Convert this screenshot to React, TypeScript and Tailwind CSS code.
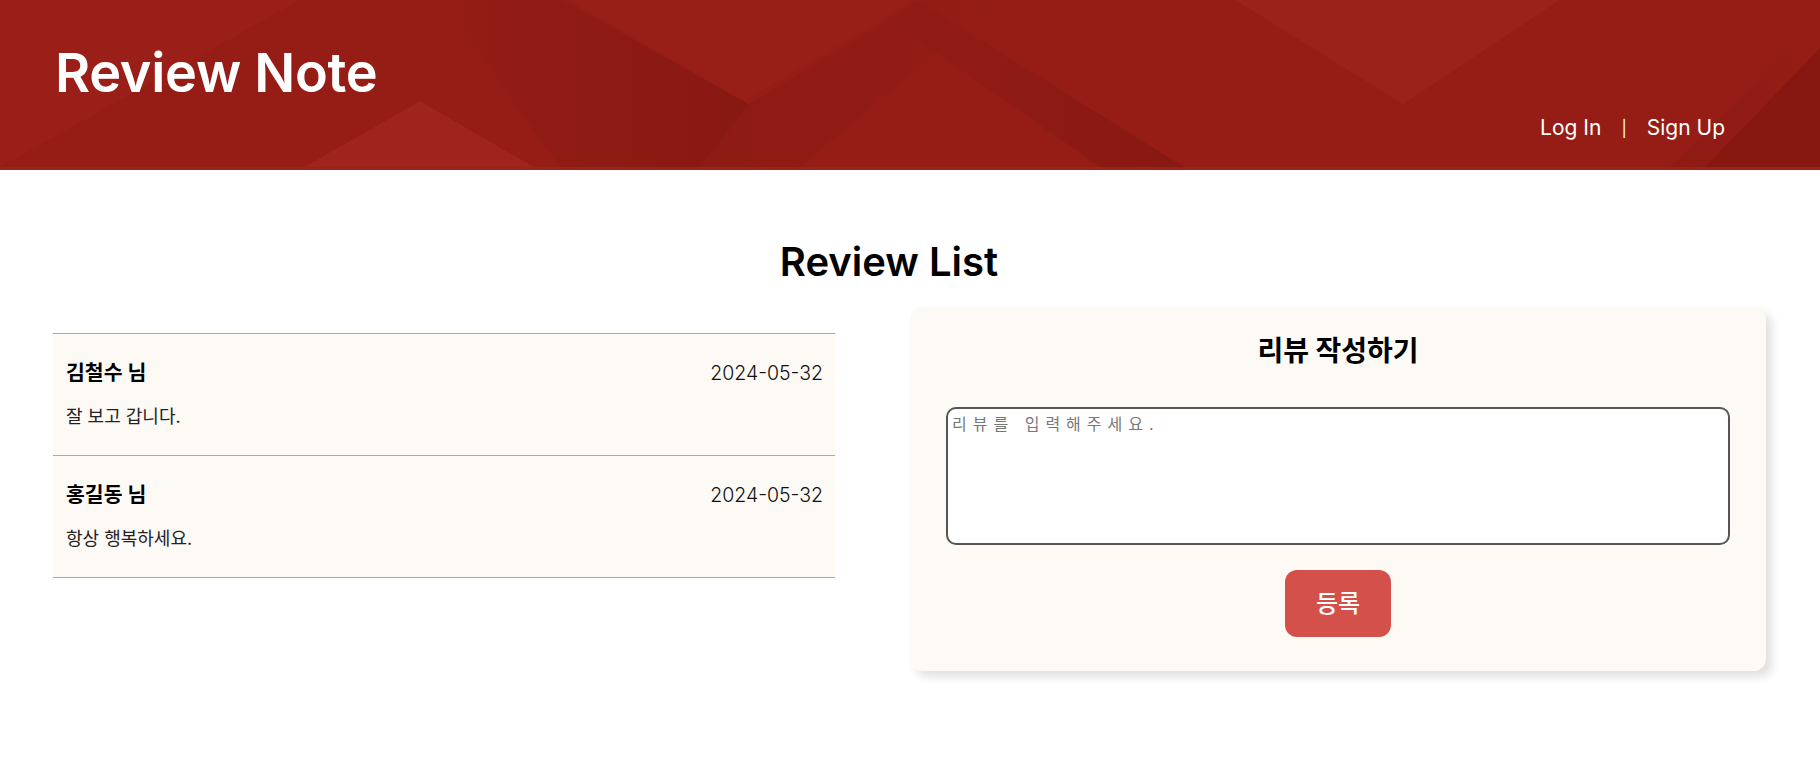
import React from 'react';

const reviews = [
  { name: '김철수 님', date: '2024-05-32', body: '잘 보고 갑니다.' },
  { name: '홍길동 님', date: '2024-05-32', body: '항상 행복하세요.' },
];

const HeaderBg = () => (
  <svg
    className="absolute inset-0 h-full w-full"
    viewBox="0 0 1820 170"
    preserveAspectRatio="none"
    aria-hidden="true"
  >
    <defs>
      <linearGradient id="shadeL" x1="0" y1="0" x2="1" y2="0">
        <stop offset="0" stopColor="#7c150f" stopOpacity="0" />
        <stop offset="1" stopColor="#7c150f" stopOpacity="0.55" />
      </linearGradient>
      <linearGradient id="shadeR" x1="1" y1="0" x2="0" y2="0">
        <stop offset="0" stopColor="#7c150f" stopOpacity="0" />
        <stop offset="1" stopColor="#7c150f" stopOpacity="0.5" />
      </linearGradient>
    </defs>
    <rect width="1820" height="170" fill="#951d16" />
    <polygon points="0,0 300,0 0,170" fill="#9c221b" opacity="0.6" />
    {/* left shadow band */}
    <polygon points="440,0 563,0 749,106 700,170 560,170" fill="url(#shadeL)" />
    <polygon points="749,106 910,7 910,0 1000,0 800,170 700,170" fill="url(#shadeR)" opacity="0.6" />
    {/* light triangle pointing up */}
    <polygon points="420,103 304,170 534,170" fill="#9f241e" />
    {/* light inverted triangles at top */}
    <polygon points="569,0 917,0 743,103" fill="#981f18" />
    <polygon points="1235,0 1560,0 1403,106" fill="#9b221b" />
    {/* diagonal shadow from top middle */}
    <polygon points="860,0 917,0 1184,170 1100,170" fill="url(#shadeL)" />
    {/* right shadow */}
    <polygon points="1820,49 1820,170 1705,170" fill="#861811" />
    <polygon points="1800,40 1820,49 1705,170 1670,170" fill="url(#shadeR)" opacity="0.5" />
  </svg>
);

export default function App() {
  return (
    <div className="min-h-screen bg-white font-['Inter','Noto_Sans_CJK_KR',sans-serif]">
      <header className="relative h-[170px] overflow-hidden border-b-[3px] border-[#9b211a]">
        <HeaderBg />
        <div className="relative flex h-full items-start justify-between pl-[55px] pr-[95px]">
          <h1 className="mt-[38px] text-[54px] font-semibold leading-[70px] tracking-[-0.3px] text-white">
            Review Note
          </h1>
          <nav className="mt-[114px] flex items-center gap-[20px] text-[21px] leading-[28px] text-white">
            <a href="#login">Log In</a>
            <span className="text-[16px]">|</span>
            <a href="#signup">Sign Up</a>
          </nav>
        </div>
      </header>

      <main>
        <h2 className="ml-[-42px] mt-[64px] text-center text-[40px] font-semibold leading-[56px] text-black">
          Review List
        </h2>

        <div className="mt-[17px] flex items-start gap-[75px] pl-[53px]">
          <ul className="mt-[26px] w-[782px] border-t border-[#aaaaaa]">
            {reviews.map((r, i) => (
              <li
                key={i}
                className="border-b border-[#aaaaaa] bg-[#fdf9f5] pb-[26px] pl-[13px] pr-[12px] pt-[27px]"
              >
                <div className="flex items-center justify-between">
                  <span className="text-[20.5px] font-bold leading-[24px] text-black">{r.name}</span>
                  <span className="text-[19.5px] font-light leading-[24px] text-[#111]">{r.date}</span>
                </div>
                <p className="mt-[20px] text-[18px] leading-[24px] text-[#222]">{r.body}</p>
              </li>
            ))}
          </ul>

          <section className="w-[856px] rounded-[12px] bg-[#fdf9f5] px-[36px] pb-[34px] pt-[26px] shadow-[6px_6px_10px_rgba(0,0,0,0.12)]">
            <h3 className="text-center text-[28px] font-bold leading-[36px] text-black">리뷰 작성하기</h3>
            <textarea
              className="mt-[38px] block h-[138px] w-full resize-none rounded-[10px] border-2 border-[#555] bg-white px-[4px] py-[3px] text-[16px] tracking-[6px] text-[#333] outline-none placeholder:text-[#777]"
              placeholder="리뷰를 입력해주세요."
            />
            <div className="mt-[25px] flex justify-center">
              <button className="h-[67px] w-[106px] rounded-[12px] bg-[#d4504a] text-[24px] font-medium text-white">
                등록
              </button>
            </div>
          </section>
        </div>
      </main>
    </div>
  );
}
